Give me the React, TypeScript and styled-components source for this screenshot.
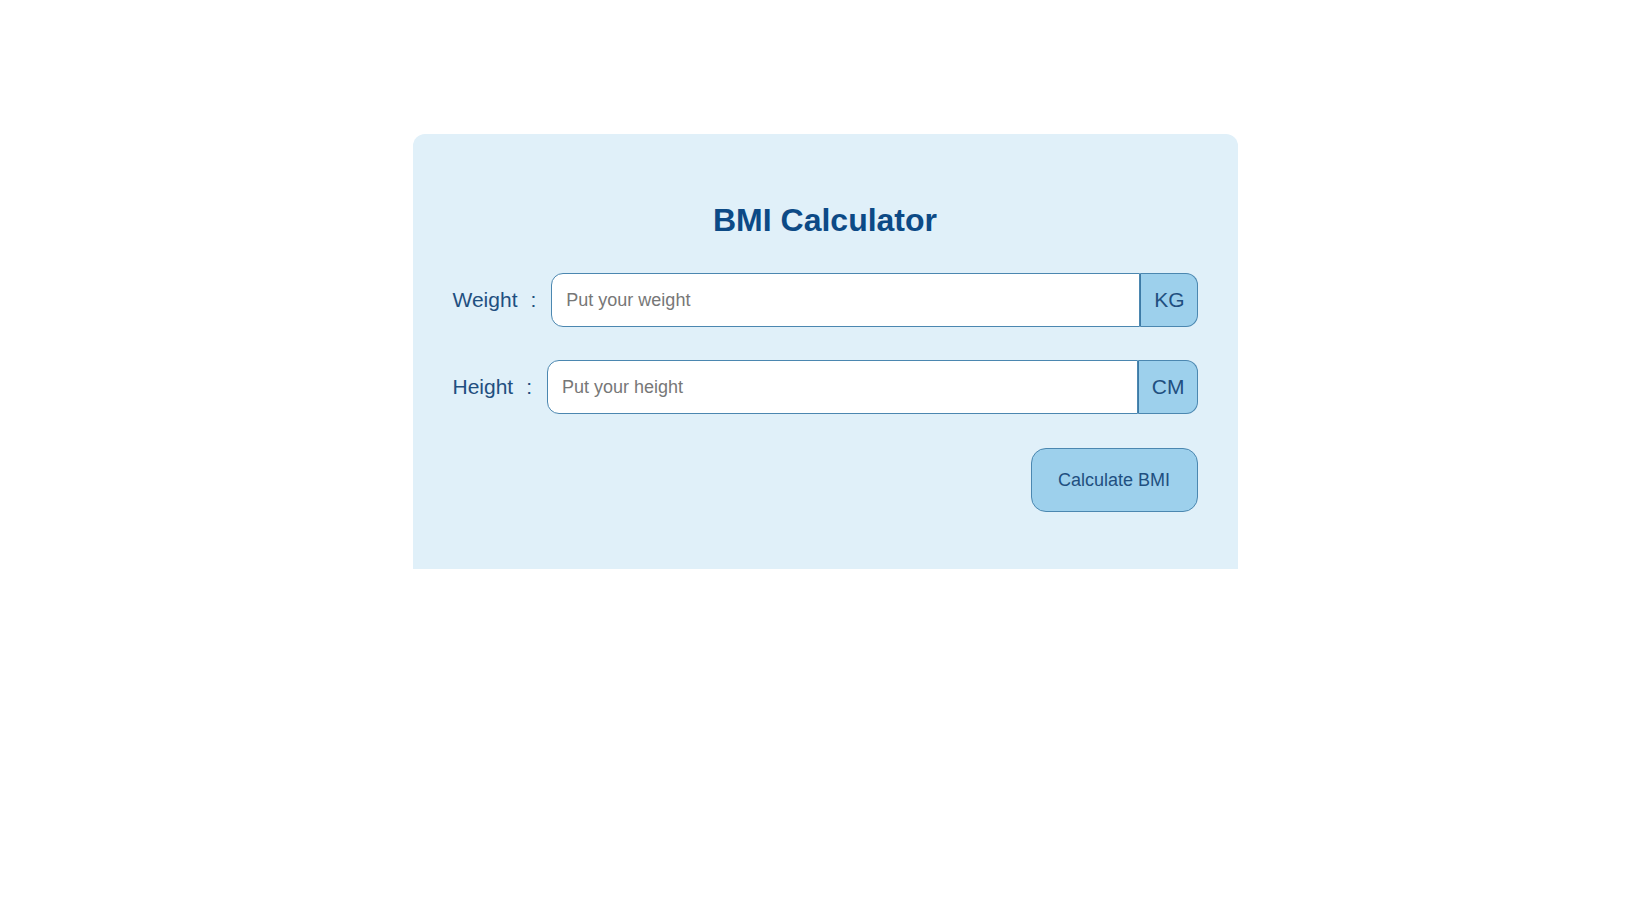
import React from "react";
import styled, { createGlobalStyle } from "styled-components";

const GlobalStyle = createGlobalStyle`
  html, body {
    margin: 0;
    padding: 0;
    background: #ffffff;
    font-family: "Liberation Sans", Arial, sans-serif;
  }
  * { box-sizing: border-box; }
`;

const Card = styled.div`
  width: 825px;
  height: 435px;
  margin: 134px auto 0;
  background: #e0f0f9;
  border-radius: 12px 12px 0 0;
  padding: 68px 40px 0 40px;
  display: flex;
  flex-direction: column;
`;

const Title = styled.h1`
  margin: 0 0 34px;
  font-size: 32px;
  line-height: 37px;
  font-weight: bold;
  color: #0c4a86;
  text-align: center;
`;

const Row = styled.div<{ $gapAfter: number }>`
  display: flex;
  align-items: center;
  height: 54px;
  margin-bottom: ${(p) => p.$gapAfter}px;
`;

const Label = styled.label`
  display: flex;
  align-items: center;
  gap: 13px;
  margin-right: 15px;
  font-size: 21px;
  color: #1f4f80;
  white-space: nowrap;
`;

const Group = styled.div`
  flex: 1;
  display: flex;
  height: 54px;
`;

const Input = styled.input`
  flex: 1;
  min-width: 0;
  height: 100%;
  border: 1px solid #4b87b0;
  border-radius: 12px 0 0 12px;
  background: #ffffff;
  padding: 0 14px;
  font-family: "Liberation Sans", Arial, sans-serif;
  font-size: 18px;
  color: #333;
  outline: none;
  &::placeholder {
    color: #777777;
  }
`;

const Addon = styled.span`
  display: flex;
  align-items: center;
  justify-content: center;
  height: 100%;
  padding: 0 12px 0 13px;
  background: #9dd0ec;
  border: 1px solid #4b87b0;
  border-left: 1px solid #3d7aa6;
  border-radius: 0 12px 12px 0;
  font-size: 21px;
  color: #1f4f80;
`;

const Actions = styled.div`
  display: flex;
  justify-content: flex-end;
`;

const Button = styled.button`
  width: 167px;
  height: 64px;
  background: #9dd0ec;
  border: 1px solid #4b87b0;
  border-radius: 15px;
  font-family: "Liberation Sans", Arial, sans-serif;
  font-size: 18px;
  color: #1f4f80;
  cursor: pointer;
`;

export default function App() {
  return (
    <>
      <GlobalStyle />
      <Card>
        <Title>BMI Calculator</Title>
        <Row $gapAfter={33}>
          <Label htmlFor="weight">
            <span>Weight</span>
            <span>:</span>
          </Label>
          <Group>
            <Input id="weight" type="text" placeholder="Put your weight" />
            <Addon>KG</Addon>
          </Group>
        </Row>
        <Row $gapAfter={34}>
          <Label htmlFor="height">
            <span>Height</span>
            <span>:</span>
          </Label>
          <Group>
            <Input id="height" type="text" placeholder="Put your height" />
            <Addon>CM</Addon>
          </Group>
        </Row>
        <Actions>
          <Button type="button">Calculate BMI</Button>
        </Actions>
      </Card>
    </>
  );
}
